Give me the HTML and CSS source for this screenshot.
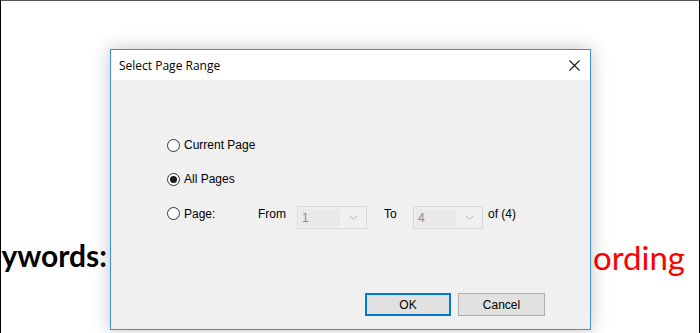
FILE: index.html
```html
<!DOCTYPE html>
<html>
<head>
<meta charset="utf-8">
<link rel="stylesheet" href="styles.css">
</head>
<body>
<div class="page">
  <div class="doc-line">
    <div class="doc-left"><span class="kw">ywords:</span></div>
    <div class="doc-right"><span class="rec">ording</span></div>
  </div>
</div>

<div class="dialog">
  <div class="titlebar">
    <span class="title">Select Page Range</span>
    <svg class="close" width="11" height="11" viewBox="0 0 11 11"><path d="M0.5 0.5 L10.5 10.5 M10.5 0.5 L0.5 10.5" stroke="#1a1a1a" stroke-width="1.1" fill="none"/></svg>
  </div>
  <div class="body">
    <div class="row">
      <span class="radio"></span><span class="lbl">Current Page</span>
    </div>
    <div class="row">
      <span class="radio checked"></span><span class="lbl">All Pages</span>
    </div>
    <div class="row row-range">
      <span class="radio"></span><span class="lbl lbl-page">Page:</span>
      <span class="lbl lbl-from">From</span>
      <div class="combo"><span class="field">1</span><svg class="arrow" width="9" height="5" viewBox="0 0 9 5"><path d="M0.5 0.5 L4.5 4.5 L8.5 0.5" stroke="#b4b4b4" fill="none"/></svg></div>
      <span class="lbl lbl-to">To</span>
      <div class="combo"><span class="field">4</span><svg class="arrow" width="9" height="5" viewBox="0 0 9 5"><path d="M0.5 0.5 L4.5 4.5 L8.5 0.5" stroke="#b4b4b4" fill="none"/></svg></div>
      <span class="lbl lbl-of">of (4)</span>
    </div>
    <div class="footer">
      <button class="btn btn-default">OK</button>
      <button class="btn btn-cancel">Cancel</button>
    </div>
  </div>
</div>
</body>
</html>
```

FILE: styles.css
```css
* { box-sizing: border-box; }
html, body { margin: 0; padding: 0; width: 700px; height: 333px; overflow: hidden; background: #fff; }

.page {
  height: 333px;
  border-top: 1px solid #555;
  border-left: 1px solid #000;
  border-right: 1px solid #000;
  background: #fff;
}

.doc-line {
  display: flex;
  align-items: flex-start;
  margin-top: 236px;
  padding-right: 14px;
  font-family: Lato, "Open Sans", sans-serif;
  line-height: normal;
  white-space: nowrap;
}
.doc-left {
  width: 106px;
  display: flex;
  justify-content: flex-end;
}
.kw { font-weight: bold; color: #000; font-size: 30px; }
.doc-right {
  margin-left: auto;
}
.rec { color: #ff0000; font-size: 33px; }

.dialog {
  position: absolute;
  left: 110px;
  top: 49px;
  width: 481px;
  height: 281px;
  border: 1px solid #3d8ee0;
  background: #f0f0f0;
  box-shadow: 0 0 18px rgba(0,0,0,0.24);
  display: flex;
  flex-direction: column;
}

.titlebar {
  height: 30px;
  background: #fff;
  display: flex;
  align-items: center;
  padding-left: 8px;
  padding-right: 10px;
}
.title {
  font-family: "Open Sans", "Noto Sans", sans-serif;
  font-size: 12px;
  color: #000;
  flex: 1;
}
.close { display: block; }

.body {
  flex: 1;
  display: flex;
  flex-direction: column;
  padding: 57px 45px 13px 56px;
  font-family: "Liberation Sans", Arial, sans-serif;
  font-size: 12px;
  color: #000;
}
.row {
  display: flex;
  align-items: center;
  height: 16px;
  margin-bottom: 18px;
}
.row-range {
  align-items: flex-start;
  height: 24px;
  margin-bottom: 0;
}
.row-range .lbl { line-height: 16px; height: 16px; display: flex; align-items: center; padding-top: 2px; }
.radio {
  width: 13px;
  height: 13px;
  border: 1px solid #333;
  border-radius: 50%;
  background: #fff;
  display: flex;
  align-items: center;
  justify-content: center;
  flex: none;
}
.row-range .radio { margin-top: 2px; }
.radio.checked::after {
  content: "";
  width: 7px;
  height: 7px;
  border-radius: 50%;
  background: #1a1a1a;
}
.lbl { margin-left: 4px; white-space: nowrap; }
.lbl-page { width: 74px; margin-left: 4px; }
.lbl-from { width: 39px; margin-left: 0; }
.lbl-to { width: 29px; margin-left: 17px; }
.lbl-of { margin-left: 5px; }

.combo {
  width: 70px;
  height: 23px;
  border: 1px solid #d9d9d9;
  background: #f0f0f0;
  display: flex;
  align-items: center;
  padding: 2px 8px 2px 2px;
  margin-top: 1px;
}
.field {
  flex: 1;
  align-self: stretch;
  background: #e9e9e9;
  color: #8a8a8a;
  display: flex;
  align-items: center;
  padding-left: 2px;
  margin-right: 9px;
}
.arrow { display: block; }

.footer {
  margin-top: auto;
  display: flex;
  justify-content: flex-end;
  gap: 7px;
}
.btn {
  width: 86px;
  height: 23px;
  background: #e1e1e1;
  border: 1px solid #adadad;
  font-family: "Liberation Sans", Arial, sans-serif;
  font-size: 12px;
  color: #000;
  padding: 0;
}
.btn-cancel { width: 87px; }
.btn-default { border: 2px solid #0078d7; }
```
